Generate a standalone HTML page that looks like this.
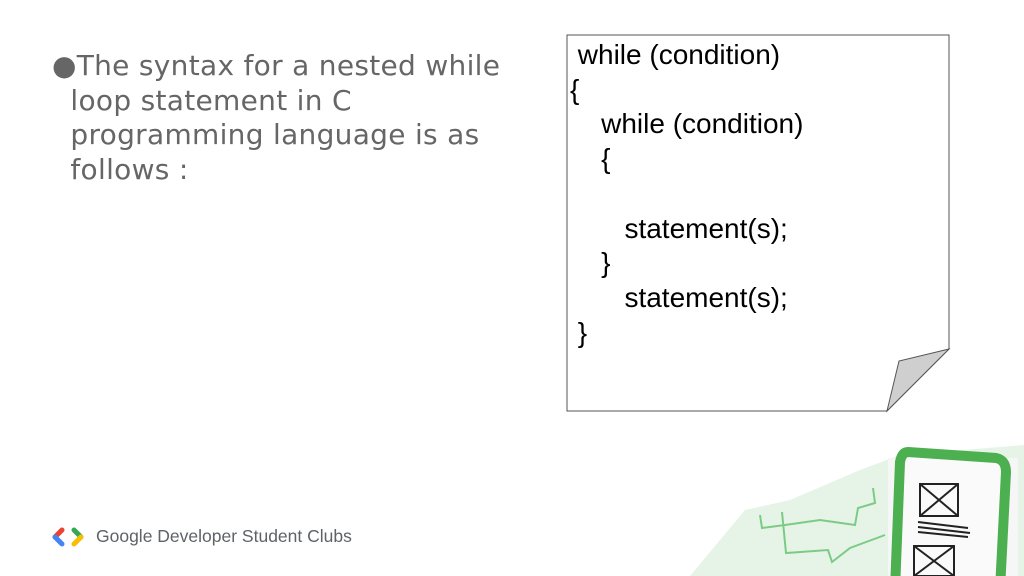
<!DOCTYPE html>
<html><head><style>
body{margin:0;width:1024px;height:576px;background:#fff;position:relative;overflow:hidden;font-family:"Liberation Sans",sans-serif}
.t{position:absolute;left:52px;top:49px;width:480px;font-family:"DejaVu Sans",sans-serif;font-size:28px;line-height:34.5px;color:#666;letter-spacing:0.3px}
.c{position:absolute;font-size:28px;color:#000;white-space:pre;line-height:34.7px;left:570px;top:38px}
</style></head><body>
<div class="t"><span style="color:#666">●</span>The syntax for a nested while<br>&nbsp;&nbsp;loop statement in C<br>&nbsp;&nbsp;programming language is as<br>&nbsp;&nbsp;follows :</div>
<svg width="1024" height="576" style="position:absolute;left:0;top:0">
<path d="M567 35 H949 V349 L887 411 H567 Z" fill="#fff" stroke="#555" stroke-width="1"/>
<path d="M949 349 L899 361 L887 411 Z" fill="#cfcfcf" stroke="#555" stroke-width="1"/>
<path d="M690 576 L745 510 L790 500 L860 470 L900 455 L1024 445 V576 Z" fill="#e6f4e8"/>
<path d="M760 515 L762 528 L785 525 L820 520 L855 525 L858 508 L875 503 L873 488" stroke="#7ccb85" stroke-width="2" fill="none"/>
<path d="M782 512 L786 553 L828 550 L832 562 L850 548 L885 535" stroke="#7ccb85" stroke-width="2" fill="none"/>
<rect x="888" y="458" width="130" height="130" fill="#f6f6f6"/>
<path d="M908 452 L996 458 Q1006 460 1006 472 L1000 590 L895 590 L900 462 Q902 452 908 452Z" fill="#fafafa" stroke="#4caf50" stroke-width="10"/>
<g stroke="#222" stroke-width="2" fill="none">
<rect x="920" y="484" width="38" height="32"/><path d="M920 484 L958 516 M958 484 L920 516"/>
<path d="M918 522 L968 528 M918 527 L970 533 M918 532 L968 537"/>
<rect x="914" y="546" width="40" height="30"/><path d="M914 546 L954 576 M954 546 L914 576"/>
</g>
<path d="M62 530 L55 537" stroke="#ea4335" stroke-width="5" fill="none" stroke-linecap="round"/>
<path d="M55 537 L62 544" stroke="#4285f4" stroke-width="5" stroke-linecap="round"/>
<path d="M74 530 L81 537" stroke="#34a853" stroke-width="5" stroke-linecap="round"/>
<path d="M81 537 L74 544" stroke="#fbbc04" stroke-width="5" stroke-linecap="round"/>
</svg>
<div class="c"> while (condition)
{
    while (condition)
    {

       statement(s);
    }
       statement(s);
 }</div>
<div style="position:absolute;left:96px;top:526px;font-size:17.5px;color:#5f6368">Google Developer Student Clubs</div>
</body></html>
